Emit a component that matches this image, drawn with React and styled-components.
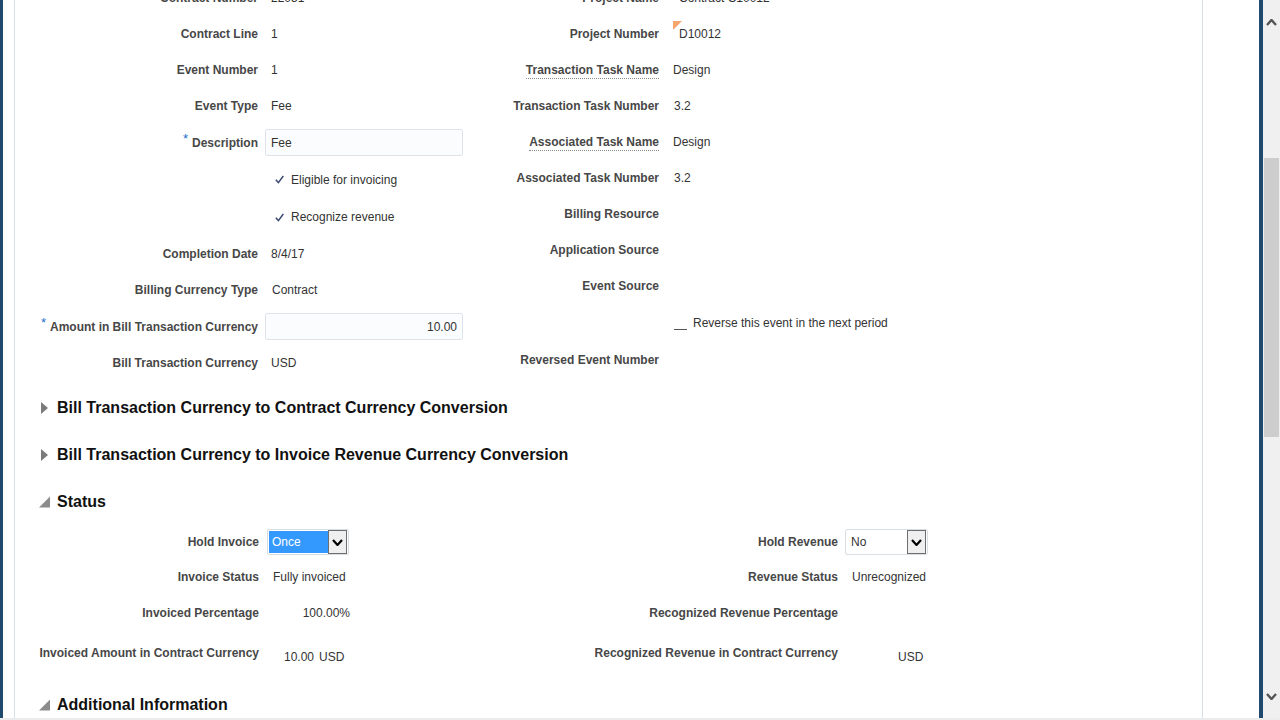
import styled, { createGlobalStyle } from "styled-components";

const GlobalStyle = createGlobalStyle`
  html, body {
    margin: 0;
    height: 100%;
    overflow: hidden;
    background: #ececec;
  }
  body {
    font-family: "Liberation Sans", Arial, sans-serif;
    font-size: 12px;
    color: #333;
  }
`;

const Page = styled.div`
  display: flex;
  height: 718px;
  background: #fff;
`;

const EdgeBar = styled.div`
  flex: none;
  width: ${(props) => props.w}px;
  background: #1f4a6e;
`;

const Gutter = styled.div`
  flex: none;
  width: ${(props) => props.w}px;
  background: #fff;
`;

const Panel = styled.main`
  flex: 1;
  min-width: 0;
  border-left: 1px solid #d6e0e8;
  border-right: 1px solid #d6e0e8;
  overflow: hidden;
`;

const Content = styled.div`
  margin-top: -20px;
`;

const TopForm = styled.div`
  display: flex;
  padding-bottom: 3px;
`;

const FieldColumn = styled.div`
  display: flex;
  flex-direction: column;
  width: ${(props) => (props.w ? `${props.w}px` : "auto")};
  flex: ${(props) => (props.w ? "none" : "1")};
`;

const FieldRow = styled.div`
  display: grid;
  grid-template-columns: ${(props) => props.labelW}px 1fr;
  column-gap: ${(props) => props.gap}px;
  align-items: center;
  height: ${(props) => props.h || 36}px;
`;

const FieldLabel = styled.label`
  text-align: right;
  font-weight: bold;
  color: #474747;
  white-space: nowrap;
`;

const HelpLabel = styled.span`
  border-bottom: 1px dotted #8a8a8a;
  padding-bottom: 1px;
`;

const Required = styled.span`
  color: #1b6fd0;
  font-weight: normal;
  font-size: 13px;
  position: relative;
  top: -4px;
  margin-right: 4px;
`;

const FieldValue = styled.div`
  display: flex;
  align-items: center;
  padding-left: ${(props) => props.pad || 0}px;
  color: #333;
  white-space: nowrap;
`;

const TextInput = styled.div`
  box-sizing: border-box;
  width: 198px;
  height: 27px;
  display: flex;
  align-items: center;
  justify-content: ${(props) => (props.right ? "flex-end" : "flex-start")};
  padding: 0 5px;
  border: 1px solid #dde3e8;
  border-radius: 2px;
  background: #fbfcfd;
  color: #333;
`;

const CheckIcon = styled.svg`
  width: 9px;
  height: 9px;
  margin-right: 7px;
  flex: none;
`;

const Marked = styled.span`
  position: relative;
  padding-left: 6px;
`;

const ChangeMarker = styled.span`
  position: absolute;
  left: 0;
  top: -6px;
  width: 0;
  height: 0;
  border-top: 9px solid #f7a56f;
  border-right: 9px solid transparent;
`;

const EmptyCheckbox = styled.span`
  display: inline-block;
  width: 13px;
  height: 13px;
  border-bottom: 1px solid #555;
  margin: 0 6px 0 1px;
`;

const SectionHeader = styled.h2`
  display: flex;
  align-items: center;
  height: ${(props) => props.h || 47}px;
  margin: 0;
  padding-left: 24px;
  font-size: 16px;
  font-weight: bold;
  color: #111;
`;

const Disclosure = styled.svg`
  width: 16px;
  height: 12px;
  margin-right: 2px;
  flex: none;
`;

const StatusGrid = styled.div`
  display: grid;
  grid-template-columns: 244px 321px 258px 1fr;
  grid-template-rows: 34px 36px 36px 44px;
  padding-bottom: 6px;
`;

const Cell = styled.div`
  display: flex;
  align-items: center;
  justify-content: ${(props) => (props.label ? "flex-end" : "flex-start")};
  padding-left: ${(props) => props.pad || 0}px;
  padding-top: ${(props) => props.drop || 0}px;
  font-weight: ${(props) => (props.label ? "bold" : "normal")};
  color: ${(props) => (props.label ? "#474747" : "#333")};
  white-space: nowrap;
`;

const NumberBox = styled.span`
  display: inline-block;
  width: ${(props) => props.w}px;
  text-align: right;
`;

const Currency = styled.span`
  margin-left: 5px;
`;

const SelectBox = styled.div`
  box-sizing: border-box;
  display: flex;
  width: ${(props) => props.w}px;
  height: 26px;
  padding: 1px;
  border: 1px solid #d9dee2;
  border-radius: 2px;
  background: #fff;
`;

const SelectText = styled.span`
  flex: 1;
  display: flex;
  align-items: center;
  padding-left: ${(props) => (props.active ? 3 : 4)}px;
  background: ${(props) => (props.active ? "#3399ff" : "transparent")};
  color: ${(props) => (props.active ? "#fff" : "#333")};
`;

const SelectButton = styled.span`
  box-sizing: border-box;
  width: 19px;
  margin: -1px 0;
  display: flex;
  align-items: center;
  justify-content: center;
  border: 1px solid #6e6e6e;
  background: #efefef;
`;

const Scrollbar = styled.div`
  flex: none;
  width: 17px;
  display: flex;
  flex-direction: column;
  background: #f0f0f0;
`;

const ScrollArrow = styled.div`
  height: ${(props) => props.h}px;
  display: flex;
  align-items: center;
  justify-content: center;
`;

const ScrollTrack = styled.div`
  flex: 1;
  padding-top: 114px;
`;

const ScrollThumb = styled.div`
  width: 15px;
  height: 279px;
  margin-left: 1px;
  background: #cdcdcd;
`;

function Check() {
  return (
    <CheckIcon viewBox="0 0 9 9">
      <path d="M0.8 4.8 L3.4 7.6 L8.3 1" fill="none" stroke="#3b4a72" strokeWidth="1.5" />
    </CheckIcon>
  );
}

function Chevron({ up, color = "#000", w = 10, h = 6, sw = 2 }) {
  return (
    <svg width={w} height={h} viewBox={`0 0 ${w} ${h}`}>
      <polyline
        points={up ? `1,${h - 1} ${w / 2},1 ${w - 1},${h - 1}` : `1,1 ${w / 2},${h - 1} ${w - 1},1`}
        fill="none"
        stroke={color}
        strokeWidth={sw}
      />
    </svg>
  );
}

function Select({ value, active, w }) {
  return (
    <SelectBox w={w}>
      <SelectText active={active}>{value}</SelectText>
      <SelectButton>
        <Chevron w={11} h={7} sw={2.2} />
      </SelectButton>
    </SelectBox>
  );
}

function Section({ title, open, h }) {
  return (
    <SectionHeader h={h}>
      <Disclosure viewBox="0 0 16 12">
        {open ? (
          <polygon points="0,11.5 11,11.5 11,0.5" fill="#8c8c8c" />
        ) : (
          <polygon points="2,0 9,6 2,12" fill="#7b7b7b" />
        )}
      </Disclosure>
      {title}
    </SectionHeader>
  );
}

function LeftRow({ label, required, h, pad = 6, children }) {
  return (
    <FieldRow labelW={243} gap={7} h={h}>
      <FieldLabel>
        {required && <Required>*</Required>}
        {label}
      </FieldLabel>
      <FieldValue pad={pad}>{children}</FieldValue>
    </FieldRow>
  );
}

function RightRow({ label, help, h, pad = 0, children }) {
  return (
    <FieldRow labelW={189} gap={14} h={h}>
      <FieldLabel>{help ? <HelpLabel>{label}</HelpLabel> : label}</FieldLabel>
      <FieldValue pad={pad}>{children}</FieldValue>
    </FieldRow>
  );
}

export default function App() {
  return (
    <>
      <GlobalStyle />
      <Page>
        <EdgeBar w={3} />
        <Gutter w={11} />
        <Panel>
          <Content>
            <TopForm>
              <FieldColumn w={455}>
                <LeftRow label="Contract Number">22051</LeftRow>
                <LeftRow label="Contract Line">1</LeftRow>
                <LeftRow label="Event Number">1</LeftRow>
                <LeftRow label="Event Type">Fee</LeftRow>
                <LeftRow label="Description" required h={37} pad={0}>
                  <TextInput>Fee</TextInput>
                </LeftRow>
                <LeftRow h={37} pad={10}>
                  <Check />
                  Eligible for invoicing
                </LeftRow>
                <LeftRow h={38} pad={10}>
                  <Check />
                  Recognize revenue
                </LeftRow>
                <LeftRow label="Completion Date">8/4/17</LeftRow>
                <LeftRow label="Billing Currency Type" pad={7}>Contract</LeftRow>
                <LeftRow label="Amount in Bill Transaction Currency" required h={37} pad={0}>
                  <TextInput right>10.00</TextInput>
                </LeftRow>
                <LeftRow label="Bill Transaction Currency">USD</LeftRow>
              </FieldColumn>
              <FieldColumn>
                <RightRow label="Project Name" pad={6}>Contract C10012</RightRow>
                <RightRow label="Project Number">
                  <Marked>
                    <ChangeMarker />
                    D10012
                  </Marked>
                </RightRow>
                <RightRow label="Transaction Task Name" help>Design</RightRow>
                <RightRow label="Transaction Task Number" pad={1}>3.2</RightRow>
                <RightRow label="Associated Task Name" help>Design</RightRow>
                <RightRow label="Associated Task Number" pad={1}>3.2</RightRow>
                <RightRow label="Billing Resource" />
                <RightRow label="Application Source" />
                <RightRow label="Event Source" />
                <RightRow h={38}>
                  <EmptyCheckbox />
                  Reverse this event in the next period
                </RightRow>
                <RightRow label="Reversed Event Number" />
              </FieldColumn>
            </TopForm>

            <Section title="Bill Transaction Currency to Contract Currency Conversion" />
            <Section title="Bill Transaction Currency to Invoice Revenue Currency Conversion" />
            <Section title="Status" open />

            <StatusGrid>
              <Cell label>Hold Invoice</Cell>
              <Cell pad={8}>
                <Select value="Once" active w={82} />
              </Cell>
              <Cell label>Hold Revenue</Cell>
              <Cell pad={7}>
                <Select value="No" w={83} />
              </Cell>

              <Cell label>Invoice Status</Cell>
              <Cell pad={14}>Fully invoiced</Cell>
              <Cell label>Revenue Status</Cell>
              <Cell pad={14}>Unrecognized</Cell>

              <Cell label>Invoiced Percentage</Cell>
              <Cell pad={8}>
                <NumberBox w={83}>100.00%</NumberBox>
              </Cell>
              <Cell label>Recognized Revenue Percentage</Cell>
              <Cell pad={7} />

              <Cell label>Invoiced Amount in Contract Currency</Cell>
              <Cell pad={8} drop={8}>
                <NumberBox w={47}>10.00</NumberBox>
                <Currency>USD</Currency>
              </Cell>
              <Cell label>Recognized Revenue in Contract Currency</Cell>
              <Cell pad={7} drop={8}>
                <NumberBox w={48} />
                <Currency>USD</Currency>
              </Cell>
            </StatusGrid>

            <Section title="Additional Information" open />
          </Content>
        </Panel>
        <Gutter w={56} />
        <EdgeBar w={4} />
        <Scrollbar>
          <ScrollArrow h={44}>
            <Chevron up color="#555" w={11} h={7} sw={2.4} />
          </ScrollArrow>
          <ScrollTrack>
            <ScrollThumb />
          </ScrollTrack>
          <ScrollArrow h={43}>
            <Chevron color="#555" w={11} h={7} sw={2.4} />
          </ScrollArrow>
        </Scrollbar>
      </Page>
    </>
  );
}
